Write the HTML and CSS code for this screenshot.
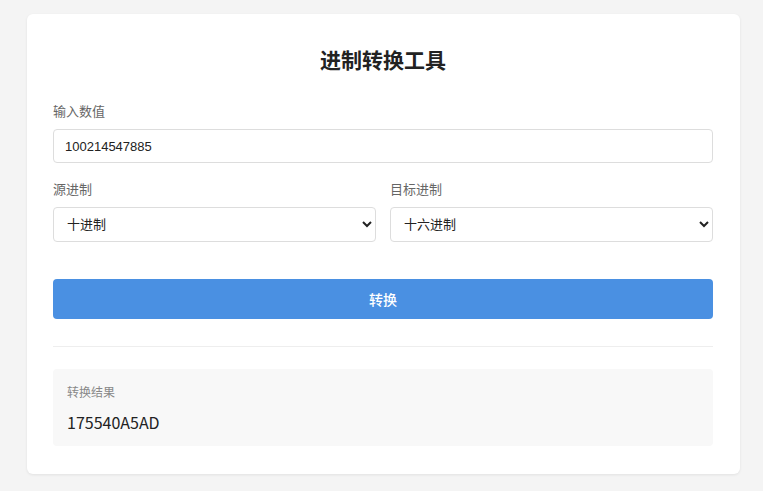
FILE: index.html
```html
<!DOCTYPE html>
<html lang="zh-CN">
<head>
    <meta charset="UTF-8">
    <meta name="viewport" content="width=device-width, initial-scale=1.0">
    <title>进制转换工具</title>
    <link rel="stylesheet" href="styles.css">
</head>
<body>
    <div class="container">
        <h1>进制转换工具</h1>

        <div class="form-group">
            <label for="inputValue">输入数值</label>
            <input type="text" id="inputValue" value="100214547885">
        </div>

        <div class="form-row">
            <div class="form-group">
                <label for="fromBase">源进制</label>
                <select id="fromBase">
                    <option value="2">二进制</option>
                    <option value="8">八进制</option>
                    <option value="10" selected>十进制</option>
                    <option value="16">十六进制</option>
                </select>
            </div>
            <div class="form-group">
                <label for="toBase">目标进制</label>
                <select id="toBase">
                    <option value="2">二进制</option>
                    <option value="8">八进制</option>
                    <option value="10">十进制</option>
                    <option value="16" selected>十六进制</option>
                </select>
            </div>
        </div>

        <button id="convertButton" class="convert-button">转换</button>

        <div class="divider"></div>

        <div class="result">
            <div class="result-label">转换结果</div>
            <div class="result-value" id="resultValue">175540A5AD</div>
        </div>
    </div>
</body>
</html>
```

FILE: styles.css
```css
body {
    font-family: "Noto Sans CJK SC", "Liberation Sans", sans-serif;
    margin: 0;
    padding: 14px 23px 17px 27px;
    background-color: #f4f4f4;
    color: #333333;
}

.container {
    background-color: #ffffff;
    border-radius: 6px;
    padding: 30px 27px 28px 26px;
    box-shadow: 0 1px 3px rgba(0, 0, 0, 0.08);
}

h1 {
    margin: 0 0 27px;
    font-size: 21px;
    line-height: 30px;
    text-align: center;
    color: #222222;
}

.form-group {
    display: flex;
    flex-direction: column;
    margin-bottom: 16px;
}

.form-group label {
    font-size: 13px;
    line-height: 20px;
    color: #666666;
    margin-bottom: 8px;
}

.form-row {
    display: grid;
    grid-template-columns: 1fr 1fr;
    gap: 14px;
}

input,
select {
    box-sizing: border-box;
    font-family: "Liberation Sans", "Noto Sans CJK SC", sans-serif;
    font-size: 13px;
    color: #222222;
    background-color: #ffffff;
    border: 1px solid #dddddd;
    border-radius: 4px;
}

input {
    height: 34px;
    padding: 0 11px;
}

select {
    height: 35px;
    padding: 0 9px;
}

.convert-button {
    display: block;
    width: 100%;
    height: 40px;
    margin-top: 21px;
    border: none;
    border-radius: 4px;
    background-color: #4a90e2;
    color: #ffffff;
    font-family: "Noto Sans CJK SC", sans-serif;
    font-size: 14px;
    font-weight: 500;
    cursor: pointer;
}

.divider {
    height: 1px;
    background-color: #eeeeee;
    margin: 27px 0 22px;
}

.result {
    background-color: #f8f8f8;
    border-radius: 4px;
    padding: 14px 14px 12px;
}

.result-label {
    font-size: 12px;
    line-height: 18px;
    color: #888888;
    margin-bottom: 9px;
}

.result-value {
    font-size: 16px;
    line-height: 24px;
    color: #222222;
}
```
